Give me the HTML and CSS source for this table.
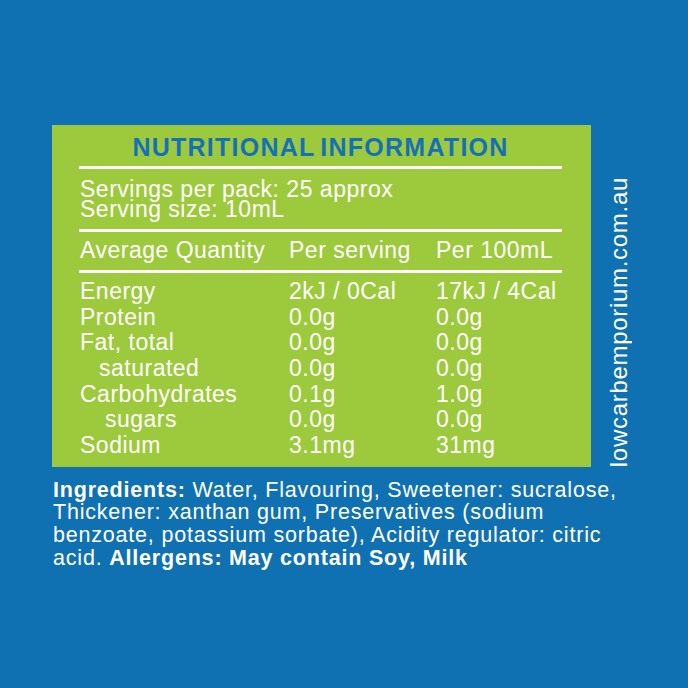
FILE: index.html
```html
<!DOCTYPE html>
<html lang="en">
<head>
<meta charset="utf-8">
<title>Nutritional Information</title>
<link rel="stylesheet" href="styles.css">
</head>
<body>
<div class="page">
  <div class="top">
    <section class="panel">
      <h1 class="title">NUTRITIONAL INFORMATION</h1>
      <div class="servings">
        <div>Servings per pack: 25 approx</div>
        <div>Serving size: 10mL</div>
      </div>
      <div class="row head">
        <span>Average Quantity</span><span>Per serving</span><span>Per 100mL</span>
      </div>
      <div class="rows">
        <div class="row"><span>Energy</span><span>2kJ / 0Cal</span><span>17kJ / 4Cal</span></div>
        <div class="row"><span>Protein</span><span>0.0g</span><span>0.0g</span></div>
        <div class="row"><span>Fat, total</span><span>0.0g</span><span>0.0g</span></div>
        <div class="row"><span class="sub1">saturated</span><span>0.0g</span><span>0.0g</span></div>
        <div class="row"><span>Carbohydrates</span><span>0.1g</span><span>1.0g</span></div>
        <div class="row"><span class="sub2">sugars</span><span>0.0g</span><span>0.0g</span></div>
        <div class="row"><span>Sodium</span><span>3.1mg</span><span>31mg</span></div>
      </div>
    </section>
    <div class="site">lowcarbemporium.com.au</div>
  </div>
  <p class="ingredients"><b>Ingredients:</b> Water, Flavouring, Sweetener: sucralose, Thickener: xanthan gum, Preservatives (sodium benzoate, potassium sorbate), Acidity regulator: citric acid. <b>Allergens: May contain Soy, Milk</b></p>
</div>
</body>
</html>
```
FILE: styles.css
```css
html, body {
  margin: 0;
  padding: 0;
}
body {
  background: #1071b2;
  width: 688px;
  height: 688px;
  overflow: hidden;
  font-family: "Liberation Sans", Arial, sans-serif;
  color: #ffffff;
}
.page {
  padding: 125px 0 0 52px;
}
.top {
  display: flex;
  align-items: flex-end;
}
.panel {
  box-sizing: border-box;
  width: 539px;
  height: 342px;
  background: #9dca3c;
  padding: 0 29px 0 27px;
}
.title {
  margin: 0;
  padding: 7px 0 4px;
  font-size: 25px;
  line-height: 30px;
  font-weight: bold;
  letter-spacing: 1.25px;
  word-spacing: -3px;
  text-align: center;
  color: #1670b8;
  border-bottom: 3px solid #ffffff;
}
.servings {
  padding: 10px 0 10px 1px;
  font-size: 23px;
  line-height: 20px;
  letter-spacing: 0.5px;
  border-bottom: 3px solid #ffffff;
}
.row {
  display: grid;
  grid-template-columns: 209px 147px 1fr;
  padding-left: 1px;
  font-size: 23px;
  letter-spacing: 0.5px;
  line-height: 25.67px;
}
.head {
  padding-top: 6px;
  padding-bottom: 8px;
  line-height: 24px;
  border-bottom: 3px solid #ffffff;
}
.rows {
  padding-top: 6px;
}
.sub1 {
  padding-left: 19px;
}
.sub2 {
  padding-left: 25px;
}
.site {
  writing-mode: vertical-rl;
  transform: rotate(180deg);
  margin-left: 15px;
  font-size: 24px;
  line-height: 26px;
  letter-spacing: 0.7px;
}
.ingredients {
  margin: 11.7px 0 0 1px;
  width: 572px;
  font-size: 21.5px;
  line-height: 22.7px;
  letter-spacing: 0.8px;
}
.ingredients b {
  font-weight: bold;
}
```
